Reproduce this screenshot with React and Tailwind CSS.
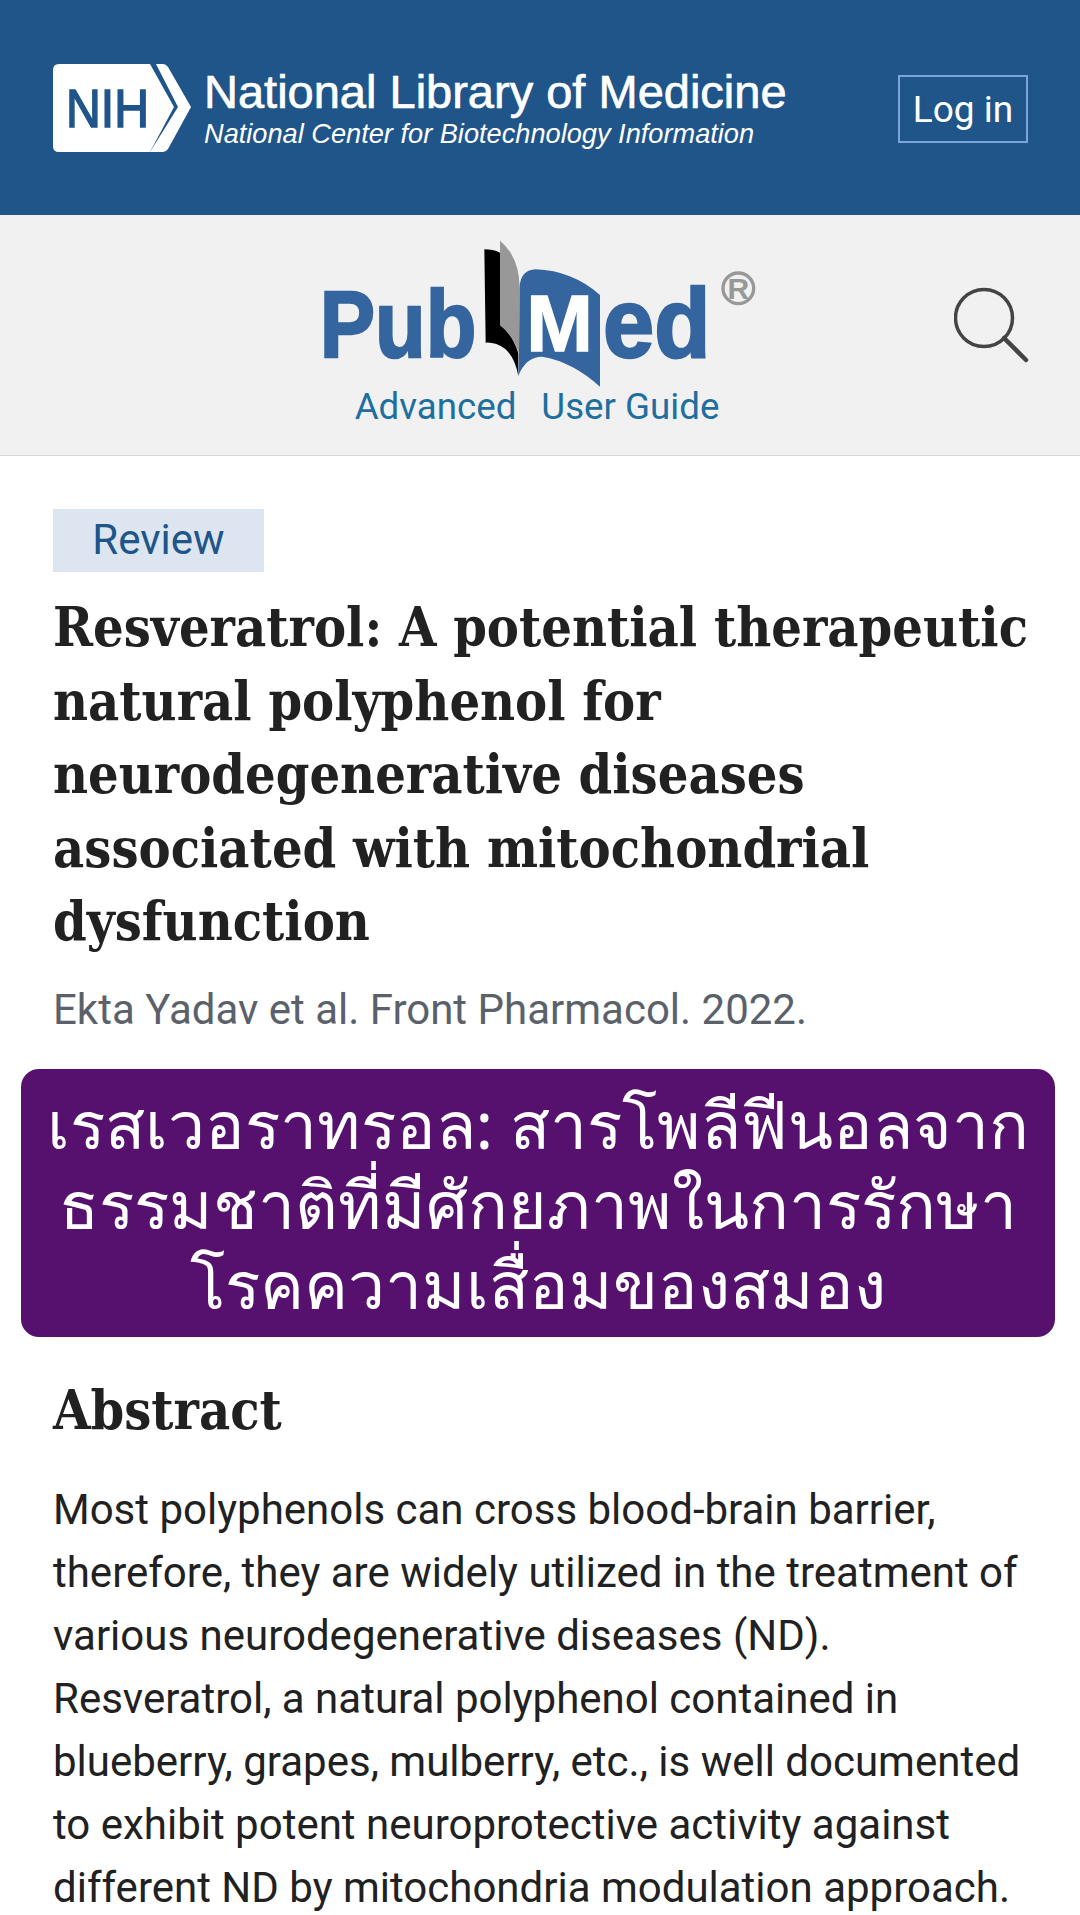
import React from 'react';

const SERIF = 'font-["DejaVu_Serif_Condensed","DejaVu_Serif",serif]';

function NihLogo() {
    return (
        <svg width="140" height="90" viewBox="0 0 140 90" className="shrink-0">
            <path d="M6 0H97L121 43L97 88H6Q0 88 0 82V6Q0 0 6 0Z" fill="#fff" />
            <path d="M103 0H110Q113 0 115 3L138 43L115 85Q113 88 110 88H97L125 43Z" fill="#fff" />
            <text x="13" y="63" fontFamily="Liberation Sans, sans-serif" fontSize="54" fill="#20558a" stroke="#20558a" strokeWidth="1.6" textLength="83" lengthAdjust="spacingAndGlyphs">NIH</text>
        </svg>
    );
}

function PubMedLogo() {
    // drawn in 3x units of the crop so the points are easy to read off
    return (
        <svg width="500" height="170" viewBox="0 0 1500 510" className="block">
            <g fontFamily="Liberation Sans, sans-serif" fontWeight="700" fill="#35659f" stroke="#35659f" strokeWidth="7">
                <text x="122" y="350" fontSize="284" textLength="470" lengthAdjust="spacingAndGlyphs">Pub</text>
                <text x="972" y="350" fontSize="292" textLength="322" lengthAdjust="spacingAndGlyphs">ed</text>
            </g>
            <path d="M616 28Q642 28 663 38V255Q702 285 718 340V408Q708 352 678 326Q650 306 620 308Z" fill="#000" />
            <path d="M663 2Q720 50 722 140L720 340Q702 285 663 255Z" fill="#989898" />
            <path d="M722 140Q725 90 770 88Q880 92 963 165V440Q880 365 790 350Q740 350 718 408L720 340Z" fill="#35659f" />
            <text x="742" y="333" fontFamily="Liberation Sans, sans-serif" fontWeight="700" fontSize="240" fill="#fff" stroke="#fff" strokeWidth="4" textLength="200" lengthAdjust="spacingAndGlyphs">M</text>
            <circle cx="1378" cy="145" r="46" fill="none" stroke="#989898" strokeWidth="10" />
            <text x="1378" y="178" textAnchor="middle" fontFamily="Liberation Sans, sans-serif" fontWeight="700" fontSize="90" fill="#989898">R</text>
        </svg>
    );
}

function SearchIcon() {
    return (
        <svg width="76" height="76" viewBox="0 0 76 76" fill="none" stroke="#444" strokeWidth="3.5" strokeLinecap="round">
            <circle cx="30" cy="31" r="28.5" />
            <path d="M50 51L72 73" strokeWidth="4.5" />
        </svg>
    );
}

export default function App() {
    return (
        <div className='w-[1080px] h-[1915px] overflow-hidden bg-white font-["Roboto",sans-serif]'>
            <header className="h-[215px] bg-[#20558a] flex items-center justify-between pl-[53px] pr-[52px] pt-[3px]">
                <div className="flex items-center gap-[11px]">
                    <NihLogo />
                    <div className='font-["Liberation_Sans",sans-serif] text-white'>
                        <div className="text-[47px] leading-[50px] whitespace-nowrap [-webkit-text-stroke:0.7px_white]">National Library of Medicine</div>
                        <div className="text-[27.2px] leading-[34px] italic whitespace-nowrap">National Center for Biotechnology Information</div>
                    </div>
                </div>
                <button className="w-[130px] h-[68px] border-2 border-[#7ba4d8] text-white text-[37px] leading-none">Log in</button>
            </header>

            <div className="relative h-[241px] bg-[#f1f1f1] border-b border-[#d6d6d6] flex flex-col items-center">
                <div className="mt-[25px] ml-[-22px]">
                    <PubMedLogo />
                </div>
                <div className="mt-[-26px] flex gap-[25px] text-[36.7px] leading-[46px] text-[#1f6f9e] ml-[-6px]">
                    <span>Advanced</span>
                    <span>User Guide</span>
                </div>
                <div className="absolute left-[954px] top-[72px]">
                    <SearchIcon />
                </div>
            </div>

            <div className="px-[53px] pt-[53px]">
                <div className="w-[211px] h-[63px] bg-[#dde5f0] text-[#20558a] text-[42px] leading-[62px] text-center">Review</div>
                <h1 className={`${SERIF} mt-[19px] text-[53.6px] leading-[73.5px] font-bold text-[#212121] whitespace-nowrap`}>
                    Resveratrol: A potential therapeutic<br />
                    natural polyphenol for<br />
                    neurodegenerative diseases<br />
                    associated with mitochondrial<br />
                    dysfunction
                </h1>
                <p className="mt-[25px] text-[42px] leading-[52px] text-[#5b616b] whitespace-nowrap">Ekta Yadav et al. Front Pharmacol. 2022.</p>
            </div>

            <div className='mx-[21px] w-[1034px] mt-[33px] h-[268px] rounded-[18px] bg-[#56116e] text-white text-center text-[66px] leading-[80px] pt-[14px] whitespace-nowrap font-["Noto_Sans",sans-serif]'>
                <div>เรสเวอราทรอล: สารโพลีฟีนอลจาก</div>
                <div>ธรรมชาติที่มีศักยภาพในการรักษา</div>
                <div>โรคความเสื่อมของสมอง</div>
            </div>

            <div className="px-[53px] pt-[39px]">
                <h2 className={`${SERIF} text-[53.6px] leading-[70px] font-bold text-[#212121]`}>Abstract</h2>
                <p className="mt-[32px] text-[42px] leading-[63px] text-[#212121] whitespace-nowrap">
                    Most polyphenols can cross blood-brain barrier,<br />
                    therefore, they are widely utilized in the treatment of<br />
                    various neurodegenerative diseases (ND).<br />
                    Resveratrol, a natural polyphenol contained in<br />
                    blueberry, grapes, mulberry, etc., is well documented<br />
                    to exhibit potent neuroprotective activity against<br />
                    different ND by mitochondria modulation approach.
                </p>
            </div>
        </div>
    );
}
